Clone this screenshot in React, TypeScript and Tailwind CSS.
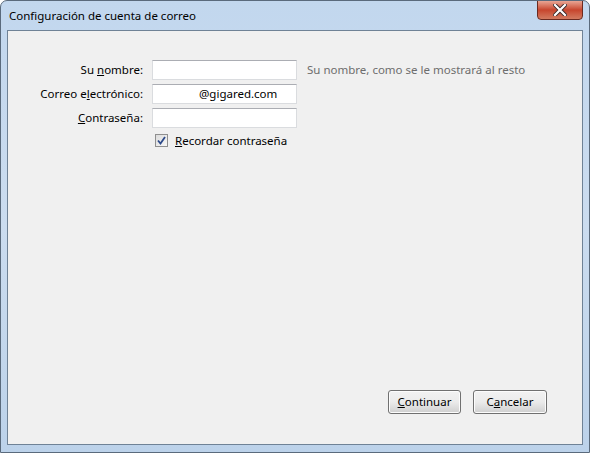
import React from "react";

const font = { fontFamily: '"Noto Sans", "Segoe UI", sans-serif' };

function Field({ label, value }: { label: [string, string, string]; value?: string }) {
  return (
    <div className="flex items-center h-[20px] mb-[4px]">
      <div className="w-[136px] text-right pr-[1px] text-[11.5px] text-black">
        {label[0]}
        <span className="underline">{label[1]}</span>
        {label[2]}
      </div>
      <div className="ml-[8px] w-[145px] h-[20px] bg-white border border-[#dadcdf] border-t-[#abadb3] text-[11.5px] text-black flex items-center pl-[46px]">
        {value}
      </div>
    </div>
  );
}

export default function App() {
  return (
    <div style={font} className="w-[590px] h-[453px] flex flex-col bg-gradient-to-b from-[#c2d7ee] via-[#cbdcef] to-[#bcd2ea] border border-[#5a6a7c] rounded-t-[7px] relative overflow-hidden">
      <div className="h-[29px] flex items-center pl-[8px] pt-[1px] text-[11.5px] text-black">
        Configuración de cuenta de correo
      </div>
      <div className="absolute right-[6px] top-[-1px] w-[46px] h-[20px] rounded-b-[4px] border border-[#6b2a20] bg-gradient-to-b from-[#e8a594] via-[#c7452d] to-[#d27a60] flex items-center justify-center">
        <svg width="14" height="12" viewBox="0 0 14 12">
          <path d="M2 1 L12 11 M12 1 L2 11" stroke="#3a2a2a" strokeWidth="4" strokeLinecap="square" />
          <path d="M2 1 L12 11 M12 1 L2 11" stroke="#ffffff" strokeWidth="2.2" strokeLinecap="square" />
        </svg>
      </div>
      <div className="flex-1 mx-[6px] mb-[7px] border border-[#6f8296] bg-[#f0f0f0] flex flex-col">
        <div className="pt-[29px]">
          <div className="flex items-center h-[20px] mb-[4px]">
            <div className="w-[136px] text-right pr-[1px] text-[11.5px] text-black">
              Su <span className="underline">n</span>ombre:
            </div>
            <div className="ml-[8px] w-[145px] h-[20px] bg-white border border-[#dadcdf] border-t-[#abadb3]" />
            <div className="ml-[10px] text-[11.5px] text-[#6d6d6d]">Su nombre, como se le mostrará al resto</div>
          </div>
          <Field label={["Correo e", "l", "ectrónico:"]} value="@gigared.com" />
          <Field label={["", "C", "ontraseña:"]} />
          <div className="flex items-center ml-[147px] mt-[4px]">
            <div className="w-[13px] h-[13px] border border-[#8f8f8f] bg-gradient-to-br from-[#dcdcdc] to-[#f7f7f7] flex items-center justify-center">
              <svg width="9" height="9" viewBox="0 0 9 9">
                <path d="M1 4.5 L3.5 7.5 L8 1" stroke="#2d4a8a" strokeWidth="1.8" fill="none" />
              </svg>
            </div>
            <span className="ml-[7px] text-[11.5px] text-black">
              <span className="underline">R</span>ecordar contraseña
            </span>
          </div>
        </div>
        <div className="mt-auto flex justify-end gap-[12px] pr-[35px] pb-[30px]">
          <button className="w-[73px] h-[24px] rounded-[3px] border border-[#707070] bg-gradient-to-b from-[#f2f2f2] via-[#ebebeb] to-[#cfcfcf] text-[11.5px] text-black shadow-[inset_0_0_0_1px_#fcfcfc]">
            <span className="underline">C</span>ontinuar
          </button>
          <button className="w-[74px] h-[24px] rounded-[3px] border border-[#707070] bg-gradient-to-b from-[#f2f2f2] via-[#ebebeb] to-[#cfcfcf] text-[11.5px] text-black shadow-[inset_0_0_0_1px_#fcfcfc]">
            C<span className="underline">a</span>ncelar
          </button>
        </div>
      </div>
    </div>
  );
}
